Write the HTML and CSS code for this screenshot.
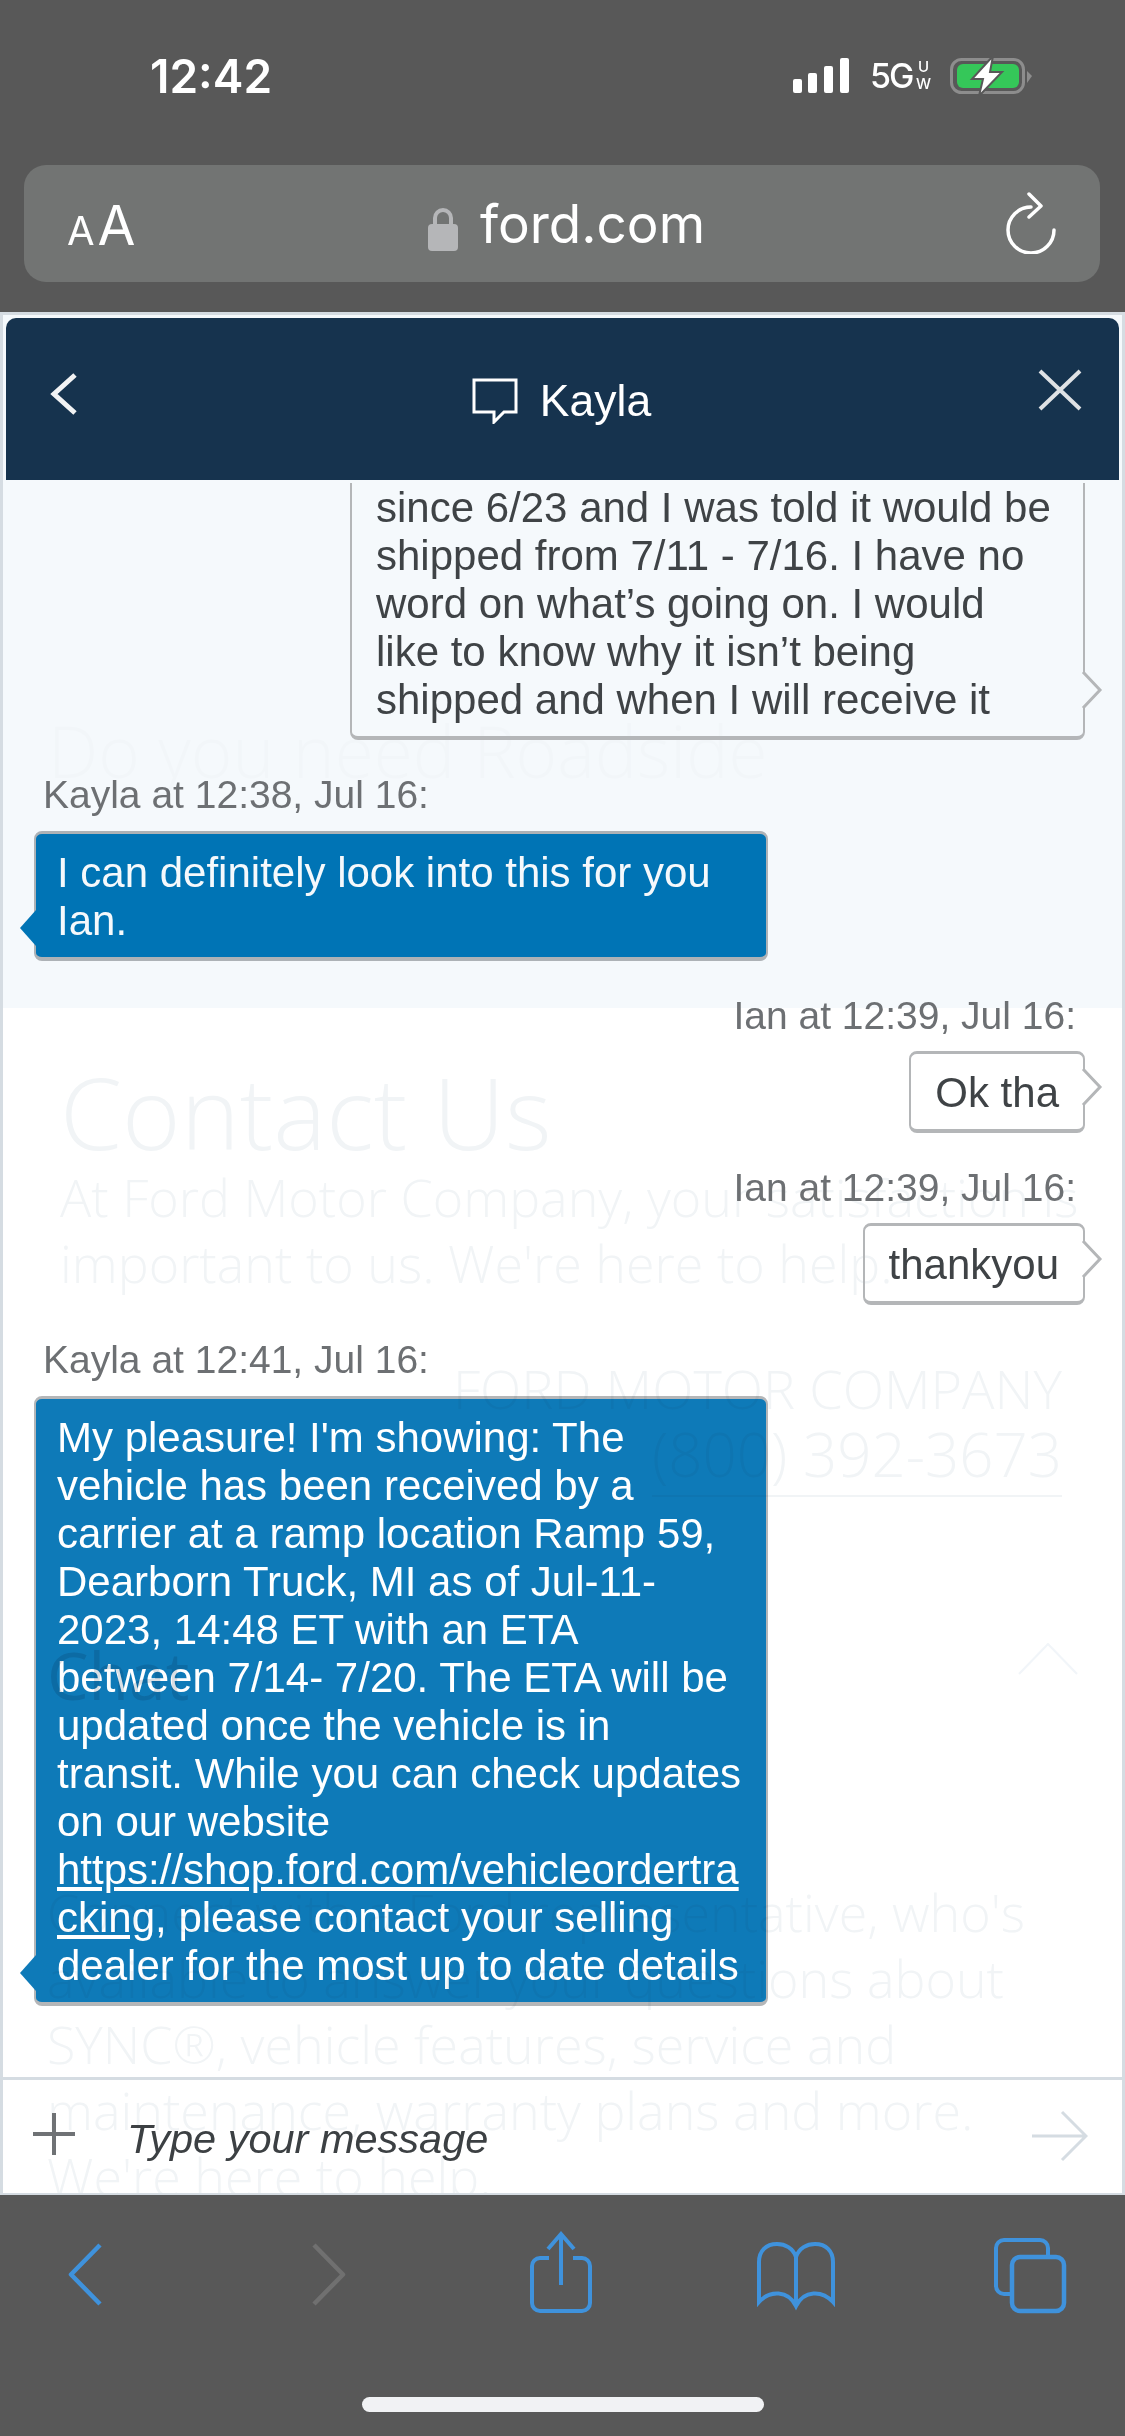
FILE: index.html
```html
<!DOCTYPE html>
<html lang="en">
<head>
<meta charset="utf-8">
<title>Ford chat</title>
<link rel="stylesheet" href="styles.css">
</head>
<body>
<div class="phone">
  <header class="browser-top">
    <div class="status">
      <span class="time">12:42</span>
      <div class="status-right">
        <svg class="signal" width="56" height="36" viewBox="0 0 56 36"><rect x="0" y="21" width="9" height="14" rx="2"/><rect x="15" y="15" width="9" height="20" rx="2"/><rect x="31" y="8" width="9" height="27" rx="2"/><rect x="47" y="0" width="9" height="35" rx="2"/></svg>
        <span class="net">5G</span>
        <span class="uw"><span>U</span><span>W</span></span>
        <svg class="battery" width="84" height="40" viewBox="0 0 84 40"><rect x="1.5" y="3.500" width="72" height="33" rx="10" fill="none" stroke="#8d8d8d" stroke-width="3"/><rect x="7" y="8" width="62" height="24" rx="6" fill="#35c759"/><path d="M77 15 L82 20 L77 27 Z" fill="#8d8d8d"/><path d="M43 0 L22 23 H33 L29 40 L52 16 H40 Z" fill="#fff" stroke="#585858" stroke-width="2"/></svg>
      </div>
    </div>
    <div class="address">
      <span class="aa"><span class="aa-small">A</span>A</span>
      <div class="domain">
        <svg width="30" height="44" viewBox="0 0 30 44"><path d="M7 19 V11 a8 8 0 0 1 16 0 V19" fill="none" stroke="#b5b6b8" stroke-width="4"/><rect x="0" y="17" width="30" height="27" rx="4" fill="#b5b6b8"/></svg>
        <span>ford.com</span>
      </div>
      <svg class="reload" width="50" height="62" viewBox="0 0 50 62"><path d="M25 15 A23 23 0 1 0 48 38" fill="none" stroke="#fff" stroke-width="3.500" stroke-linecap="round"/><path d="M23 2 L35 14 L23 25" fill="none" stroke="#fff" stroke-width="3.500" stroke-linecap="round" stroke-linejoin="round"/></svg>
    </div>
  </header>

  <main class="chat">
    <div class="backdrop" aria-hidden="true">
      <div class="bd-tint"><p class="bd-road">Do you need Roadside</p></div>
      <p class="bd-title">Contact Us</p>
      <p class="bd-line bd-first">At Ford Motor Company, your satisfaction is</p>
      <p class="bd-line">important to us. We're here to help.</p>
      <p class="bd-co">FORD MOTOR COMPANY</p>
      <p class="bd-phone"><span>(800) 392-3673</span></p>
      <div class="bd-chat"><span>Chat</span><svg width="60" height="32" viewBox="0 0 60 32"><path d="M1 31 L30 1 L59 31" fill="none" stroke="#f1f5f9" stroke-width="2"/></svg></div>
      <p class="bd-line bd-c">Connect with a Ford representative, who's</p>
      <p class="bd-line bd-c">available to answer your questions about</p>
      <p class="bd-line bd-c">SYNC®, vehicle features, service and</p>
      <p class="bd-line bd-c">maintenance, warranty plans and more.</p>
      <p class="bd-line bd-c">We're here to help.</p>
    </div>

    <div class="chat-head">
      <svg width="30" height="44" viewBox="0 0 30 44"><path d="M26 3 L5 22 L26 41" fill="none" stroke="#f2f3f4" stroke-width="5"/></svg>
      <div class="chat-title">
        <svg width="46" height="46" viewBox="0 0 46 46"><path d="M2 2 H44 V34 H32 L22 44 V34 H2 Z" fill="none" stroke="#fff" stroke-width="3"/></svg>
        <span>Kayla</span>
      </div>
      <svg class="close" width="44" height="42" viewBox="0 0 44 42"><path d="M2 2 L42 40 M42 2 L2 40" fill="none" stroke="#dfe2e5" stroke-width="4"/></svg>
    </div>

    <div class="log">
      <div class="bubble out on-tint">since 6/23 and I was told it would be shipped from 7/11 - 7/16. I have no word on what’s going on. I would like to know why it isn’t being shipped and when I will receive it
        <svg class="tail-r" width="22" height="38" viewBox="0 0 22 38"><path d="M2 1 L19 19 L2 37" stroke="#b4b6b8" stroke-width="3"/></svg>
      </div>
      <div class="label">Kayla at 12:38, Jul 16:</div>
      <div class="bubble in solid">I can definitely look into this for you Ian.
        <svg class="tail-l" width="18" height="36" viewBox="0 0 18 36"><path d="M17 0 L1 18 L17 36 Z"/></svg>
      </div>
      <div class="label label-out">Ian at 12:39, Jul 16:</div>
      <div class="bubble out">Ok tha
        <svg class="tail-r" width="22" height="38" viewBox="0 0 22 38"><path d="M2 1 L19 19 L2 37" stroke="#b4b6b8" stroke-width="3"/></svg>
      </div>
      <div class="label label-out">Ian at 12:39, Jul 16:</div>
      <div class="bubble out">thankyou
        <svg class="tail-r" width="22" height="38" viewBox="0 0 22 38"><path d="M2 1 L19 19 L2 37" stroke="#b4b6b8" stroke-width="3"/></svg>
      </div>
      <div class="label">Kayla at 12:41, Jul 16:</div>
      <div class="bubble in">My pleasure! I'm showing: The vehicle has been received by a carrier at a ramp location Ramp 59, Dearborn Truck, MI as of Jul-11-2023, 14:48 ET with an ETA between 7/14- 7/20. The ETA will be updated once the vehicle is in transit. While you can check updates on our website <a href="#">https://shop.ford.com/vehicleordertracking</a>, please contact your selling dealer for the most up to date details
        <svg class="tail-l" width="18" height="36" viewBox="0 0 18 36"><path d="M17 0 L1 18 L17 36 Z"/></svg>
      </div>
    </div>

    <div class="composer">
      <svg width="42" height="42" viewBox="0 0 42 42"><path d="M21 0 V42 M0 21 H42" stroke="#6f7275" stroke-width="4"/></svg>
      <span class="placeholder">Type your message</span>
      <svg class="send" width="56" height="52" viewBox="0 0 56 52"><path d="M0 26 H54 M30 2 L54 26 L30 50" fill="none" stroke="#d5dce2" stroke-width="3"/></svg>
    </div>
  </main>

  <footer class="browser-bottom">
    <nav class="tools">
      <svg class="t-back" width="34" height="90" viewBox="0 0 34 90"><path d="M32 15 L3 44.500 L32 74" fill="none" stroke="#3f92dc" stroke-width="4.500" stroke-linejoin="round"/></svg>
      <svg class="t-fwd" width="34" height="90" viewBox="0 0 34 90"><path d="M2 15 L31 44.500 L2 74" fill="none" stroke="#707070" stroke-width="4.500" stroke-linejoin="round"/></svg>
      <svg class="t-share" width="62" height="90" viewBox="0 0 62 90"><path d="M19 28 H10 a8 8 0 0 0 -8 8 V73 a8 8 0 0 0 8 8 H52 a8 8 0 0 0 8 -8 V36 a8 8 0 0 0 -8 -8 H43 M31 55 V4 M18 19 L31 4 L44 19" fill="none" stroke="#3f92dc" stroke-width="4"/></svg>
      <svg class="t-book" width="78" height="90" viewBox="0 0 78 90"><path d="M39 76 V27 C36 18 28 14 20 14 C9 14 2 21 2 32 V72 C13 60 31 60 39 76 C47 60 65 60 76 72 V32 C76 21 69 14 58 14 C50 14 42 18 39 27" fill="none" stroke="#3f92dc" stroke-width="4"/></svg>
      <svg class="t-tabs" width="74" height="90" viewBox="0 0 74 90"><path d="M18 64 H11 a8 8 0 0 1 -8 -8 V18 a8 8 0 0 1 8 -8 H47 a8 8 0 0 1 8 8 V26" fill="none" stroke="#3f92dc" stroke-width="4"/><rect x="19" y="27" width="52" height="54" rx="8" fill="none" stroke="#3f92dc" stroke-width="4.500"/></svg>
    </nav>
    <div class="home"></div>
  </footer>
</div>
</body>
</html>
```
FILE: styles.css
```css
* { box-sizing: border-box; }
html, body { margin: 0; padding: 0; }
body { width: 1125px; height: 2436px; overflow: hidden; background: #585858; font-family: "Liberation Sans", Arial, sans-serif; }
p { margin: 0; }
svg { display: block; flex: none; }
.phone { width: 1125px; height: 2436px; display: flex; flex-direction: column; }

/* Browser top */
.browser-top { height: 312px; background: #585858; padding: 0 25px 0 24px; flex: none; color: #fff; }
.status { height: 165px; display: flex; justify-content: space-between; padding: 56px 66px 0 126px; align-items: flex-start; }
.time { font-family: Inter, sans-serif; font-weight: 600; font-size: 46px; line-height: 40px; }
.status-right { display: flex; align-items: flex-start; margin-top: 2px; }
.signal { fill: #fff; }
.net { width: 42px; white-space: nowrap; font-family: Inter, sans-serif; font-weight: 500; font-size: 34px; line-height: 36px; margin-left: 21px; letter-spacing: -2px; }
.uw { width: 13px; display: flex; flex-direction: column; align-items: center; font-family: Inter, sans-serif; font-weight: 500; font-size: 15px; line-height: 17px; margin-left: 5px; }
.battery { margin-left: 20px; margin-top: -2px; }
.address { height: 117px; background: #727473; border-radius: 22px; display: grid; grid-template-columns: 1fr auto 1fr; align-items: center; padding: 0 44px 0 43px; }
.aa { font-size: 55px; line-height: 60px; font-family: Inter, sans-serif; margin-top: 8px; }
.aa-small { font-size: 40px; margin-right: 3px; }
.domain { display: flex; align-items: flex-end; gap: 22px; font-family: Inter, sans-serif; font-size: 53px; line-height: 60px; margin-left: 10px; }
.domain svg { margin-bottom: 3px; }
.reload { justify-self: end; margin-top: -2px; }

/* Chat panel */
.chat { position: relative; flex: none; height: 1883px; background: #fff; border-top: 3px solid #d5dce2; border-left: 3px solid #d5dce2; border-right: 3px solid #d5dce2; border-bottom: 2px solid #d5dce2; display: flex; flex-direction: column; overflow: hidden; }

/* Faded page behind the chat */
.backdrop { position: absolute; inset: 0; font-family: "Open Sans", sans-serif; font-weight: 300; color: #f1f4f6; overflow: hidden; }
.bd-tint { height: 693px; background: #f5f9fc; padding: 391px 0 0 45px; }
.bd-road { font-size: 71px; line-height: 90px; color: #f2f6f9; font-weight: 300; }
.bd-title { font-size: 100px; line-height: 120px; margin: 43px 0 0 57px; }
.bd-line { font-size: 52px; line-height: 66px; margin-left: 57px; white-space: nowrap; }
.bd-first { margin-top: -7px; }
.bd-co { font-size: 54px; line-height: 66px; text-align: right; margin: 59px 60px 0 0; }
.bd-phone { font-size: 60px; line-height: 68px; text-align: right; margin: -1px 60px 0 0; }
.bd-phone span { border-bottom: 2px solid #f1f4f6; }
.bd-chat { display: flex; justify-content: space-between; align-items: center; margin: 141px 44px 0 44px; font-size: 66px; line-height: 90px; color: #dadfe4; font-weight: 400; }
.bd-chat svg { margin-top: -30px; }
.bd-c { margin-left: 44px; }
.bd-chat + .bd-c { margin-top: 160px; }

.chat-head { position: relative; flex: none; height: 162px; margin: 3px 3px 0; background: #16334e; border-radius: 10px 10px 0 0; display: grid; grid-template-columns: 1fr auto 1fr; align-items: center; padding: 0 37px 0 43px; color: #fff; }
.chat-head > svg:first-child { margin-top: -10px; }
.chat-title { display: flex; align-items: center; gap: 22px; font-size: 44.500px; margin: 4px 0 0 -8px; }
.close { justify-self: end; margin-top: -18px; }

.log { position: relative; flex: 1; min-height: 0; margin-top: 3px; overflow: hidden; display: flex; flex-direction: column; justify-content: flex-end; padding: 0 37px 71px 31px; font-size: 42px; line-height: 48px; }
.label { flex: none; font-size: 39px; line-height: 40px; color: #6d7073; margin: 35px 0 16px 9px; }
.label-out { text-align: right; margin: 35px 9px 15px 0; }
.bubble { position: relative; flex: none; border-radius: 8px; padding: 15px 24px 12px; border: solid #b4b6b8; border-width: 3px 2px 4px; }
.out { align-self: flex-end; max-width: 735px; color: #3f4346; background: transparent; }
.out .tail-r { fill: #fff; }
.on-tint { width: 735px; padding-right: 30px; }
.on-tint .tail-r { fill: #f5f9fc; }
.in { width: 734px; color: #fff; background: #0e7ab8; mix-blend-mode: multiply; overflow-wrap: anywhere; padding: 15px 21px 12px 21px; }
.in.solid { background: #0077b7; }
.in a { color: #fff; }
.in .tail-l { fill: #0e7ab8; }
.in.solid .tail-l { fill: #0077b7; }
.tail-r { position: absolute; right: -20px; top: 14px; }
.out.on-tint .tail-r { top: auto; bottom: 27px; }
.tail-l { position: absolute; left: -17px; bottom: 11px; }

.composer { position: relative; flex: none; height: 116px; border-top: 3px solid #d5dce2; display: flex; align-items: center; padding: 0 34px 0 30px; }
.composer svg:first-child { margin-top: -6px; }
.placeholder { font-style: italic; font-size: 41.500px; color: #3c4043; margin: 4px 0 0 52px; flex: 1; }
.send { margin-top: -2px; }

/* Browser bottom */
.browser-bottom { flex: 1; background: #585858; padding-top: 35px; }
.tools { display: flex; padding-left: 68px; }
.t-fwd { margin-left: 210px; }
.t-share { margin-left: 184px; }
.t-book { margin-left: 165px; }
.t-tabs { margin-left: 158px; }
.home { width: 402px; height: 15px; border-radius: 7.500px; background: #f1f2f4; margin: 77px 0 0 362px; }
```
